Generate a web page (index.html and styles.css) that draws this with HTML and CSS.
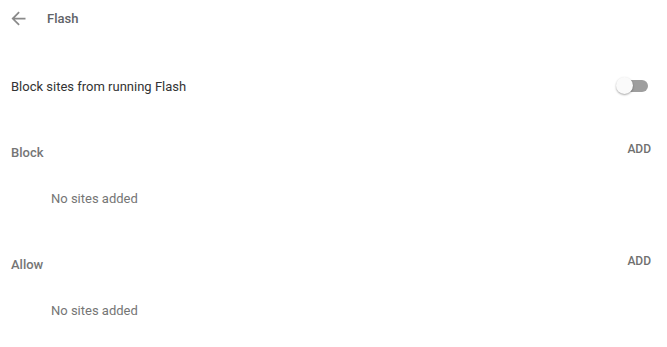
FILE: index.html
```html
<!DOCTYPE html>
<html>
<head>
<meta charset="utf-8">
<link rel="stylesheet" href="styles.css">
</head>
<body>
<div class="page">
  <div class="header">
    <svg class="back" width="21" height="21" viewBox="0 0 24 24"><path d="M20 11H7.83l5.59-5.59L12 4l-8 8 8 8 1.41-1.41L7.83 13H20v-2z" fill="#8a8a8a"/></svg>
    <span class="title">Flash</span>
  </div>
  <div class="row toggle-row">
    <span class="label">Block sites from running Flash</span>
    <span class="toggle"><span class="track"></span><span class="knob"></span></span>
  </div>
  <div class="section">
    <div class="section-head">
      <span class="section-title">Block</span>
      <span class="add">ADD</span>
    </div>
    <div class="empty">No sites added</div>
  </div>
  <div class="section">
    <div class="section-head">
      <span class="section-title">Allow</span>
      <span class="add">ADD</span>
    </div>
    <div class="empty">No sites added</div>
  </div>
</div>
</body>
</html>
```
FILE: styles.css
```css
html, body {
  margin: 0;
  padding: 0;
  background: #fff;
}
body {
  font-family: Roboto, "Liberation Sans", sans-serif;
  font-size: 13px;
}
.page {
  width: 667px;
}
.header {
  display: flex;
  align-items: center;
  height: 37px;
  padding-left: 8px;
}
.back {
  display: block;
}
.title {
  margin-left: 18px;
  color: #5f6368;
  font-size: 13px;
  font-weight: 500;
}
.toggle-row {
  display: flex;
  align-items: center;
  justify-content: space-between;
  height: 24px;
  margin-top: 37px;
  padding-left: 11px;
  padding-right: 19px;
}
.label {
  color: #333;
}
.toggle {
  position: relative;
  width: 32px;
  height: 18px;
  display: block;
}
.track {
  position: absolute;
  left: 3px;
  right: 0;
  top: 3px;
  height: 12px;
  border-radius: 6px;
  background: #9e9e9e;
}
.knob {
  position: absolute;
  left: 0;
  top: 0;
  width: 17px;
  height: 17px;
  border-radius: 50%;
  background: #fafafa;
  box-shadow: 0 1px 2px rgba(0,0,0,0.35);
}
.section-head {
  display: flex;
  justify-content: space-between;
  align-items: flex-start;
  padding-left: 11px;
  padding-right: 16px;
}
.section {
  margin-top: 44px;
}
.section + .section {
  margin-top: 48px;
}
.section-title {
  color: #757575;
  font-weight: 500;
  margin-top: 3px;
}
.add {
  color: #707070;
  font-size: 12px;
  font-weight: 500;
}
.empty {
  color: #757575;
  padding-left: 51px;
  margin-top: 31px;
}
```
